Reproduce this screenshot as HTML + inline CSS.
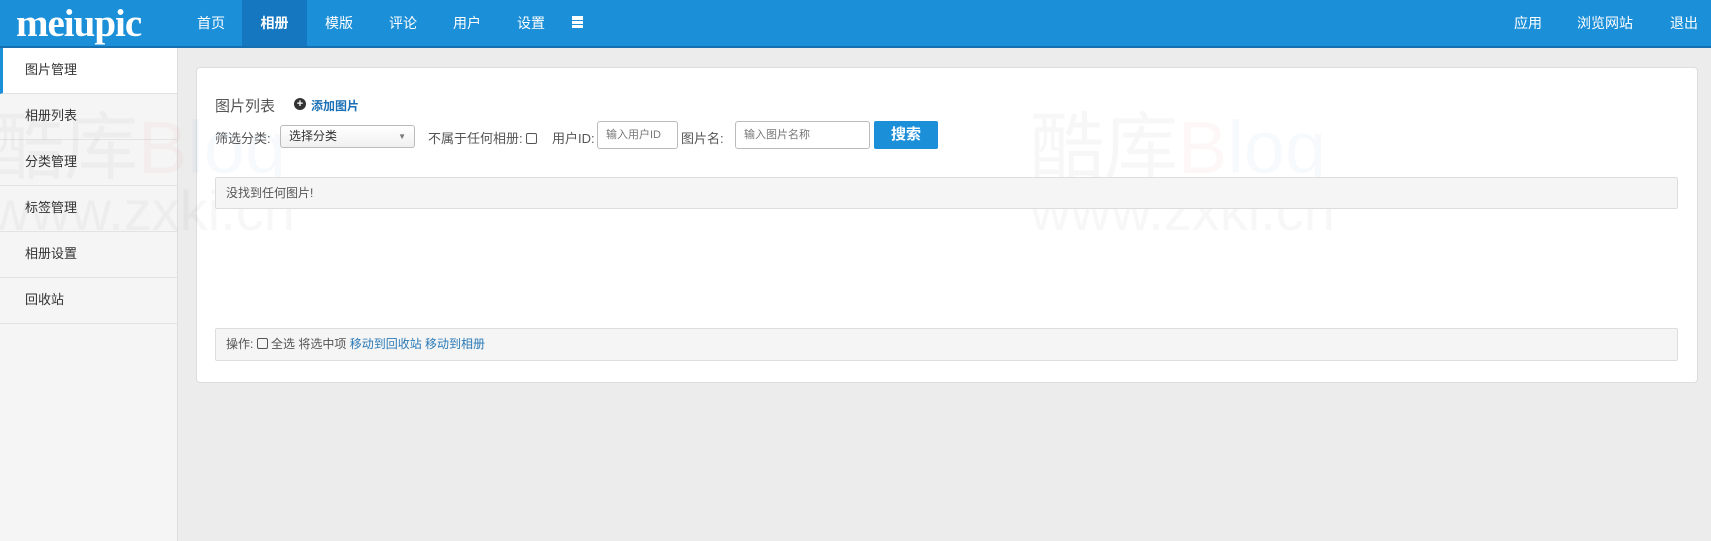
<!DOCTYPE html>
<html><head><meta charset="utf-8"><style>
*{margin:0;padding:0;box-sizing:border-box}
body{width:1711px;height:541px;overflow:hidden;background:#ececec;font-family:"Liberation Sans","Noto Sans CJK SC",sans-serif;font-size:13px;color:#555;position:relative}
.hd{position:absolute;left:0;top:0;width:1711px;height:48px;background:#1b8fd8;border-bottom:2px solid #1670b0}
.logo{position:absolute;left:16px;top:1px;color:#fff;font-family:"Liberation Serif",serif;font-size:39px;font-weight:bold;letter-spacing:-1px}
.nav{position:absolute;top:0;height:46px;line-height:46px;color:#fff;font-size:14px;text-align:center}
.act{background:#1577bf;font-weight:bold}
.sb{position:absolute;left:0;top:48px;width:178px;height:493px;background:#f5f5f5;border-right:1px solid #ddd}
.sb div{height:46px;line-height:44px;padding-left:25px;border-bottom:1px solid #e3e3e3;font-size:13px;color:#333}
.sb .on{background:#fff;border-left:3px solid #1b8fd8;padding-left:22px}
.pn{position:absolute;left:196px;top:67px;width:1502px;height:316px;background:#fff;border:1px solid #ddd;border-radius:4px}
.a{position:absolute;white-space:nowrap}
.inp{position:absolute;border:1px solid #bbb;border-radius:3px;background:#fff;font-size:11px;color:#777;padding-left:8px;line-height:26px}
.box{position:absolute;background:#f5f5f5;border:1px solid #ddd;border-radius:2px;font-size:12px;padding-left:10px}
.cb{display:inline-block;width:11px;height:11px;border:1px solid #555;border-radius:2px;vertical-align:-1px}
.wm{position:absolute;font-size:74px;color:rgba(0,0,0,0.03);white-space:nowrap}
</style></head><body>
<div class="hd">
<div class="logo">meiupic</div>
<div class="nav" style="left:190px;width:42px">首页</div>
<div class="nav act" style="left:242px;width:65px">相册</div>
<div class="nav" style="left:318px;width:42px">模版</div>
<div class="nav" style="left:382px;width:42px">评论</div>
<div class="nav" style="left:446px;width:42px">用户</div>
<div class="nav" style="left:510px;width:42px">设置</div>
<div style="position:absolute;left:572px;top:16px;width:11px;height:12px;background:#fff;border-top:0"></div>
<div style="position:absolute;left:572px;top:20px;width:11px;height:1px;background:#1b8fd8"></div>
<div style="position:absolute;left:572px;top:24px;width:11px;height:1px;background:#1b8fd8"></div>
<div class="nav" style="left:1507px;width:42px">应用</div>
<div class="nav" style="left:1572px;width:66px">浏览网站</div>
<div class="nav" style="left:1663px;width:42px">退出</div>
</div>
<div class="sb">
<div class="on">图片管理</div><div>相册列表</div><div>分类管理</div><div>标签管理</div><div>相册设置</div><div>回收站</div>
</div>
<div class="pn"></div>
<div class="wm" style="left:1030px;top:88px">酷库<span style="color:rgba(220,60,60,0.04)">B</span><span style="color:rgba(30,120,200,0.035)">log</span></div>
<div class="wm" style="left:1030px;top:178px;font-size:56px">www.zxki.cn</div>
<div class="wm" style="left:-10px;top:88px">酷库<span style="color:rgba(220,60,60,0.04)">B</span><span style="color:rgba(30,120,200,0.035)">log</span></div>
<div class="wm" style="left:-10px;top:178px;font-size:56px">www.zxki.cn</div>
<div class="a" style="left:215px;top:95px;font-size:15px;color:#555">图片列表</div>
<div class="a" style="left:294px;top:98px;width:12px;height:12px;border-radius:50%;background:#333;color:#fff;font-size:11px;line-height:12px;text-align:center;font-weight:bold">+</div>
<div class="a" style="left:311px;top:97px;color:#1a6fb5;font-size:12px;font-weight:bold">添加图片</div>
<div class="a" style="left:215px;top:128px">筛选分类:</div>
<div class="inp" style="left:280px;top:125px;width:135px;height:23px;line-height:21px;font-size:12px;color:#333;background:linear-gradient(#fff,#f0f0f0)">选择分类<span style="position:absolute;right:8px;font-size:8px;color:#777">▼</span></div>
<div class="a" style="left:428px;top:128px">不属于任何相册: <span class="cb"></span></div>
<div class="a" style="left:552px;top:128px">用户ID:</div>
<div class="inp" style="left:597px;top:121px;width:81px;height:28px">输入用户ID</div>
<div class="a" style="left:681px;top:128px">图片名:</div>
<div class="inp" style="left:735px;top:121px;width:135px;height:28px">输入图片名称</div>
<div class="a" style="left:874px;top:121px;width:64px;height:28px;background:#1b8fd8;border-radius:2px;color:#fff;font-weight:bold;font-size:15px;line-height:28px;text-align:center">搜索</div>
<div class="box" style="left:215px;top:177px;width:1463px;height:32px;line-height:30px">没找到任何图片!</div>
<div class="box" style="left:215px;top:328px;width:1463px;height:33px;line-height:31px">操作: <span class="cb"></span> 全选 将选中项 <span style="color:#2a7ab8">移动到回收站</span> <span style="color:#2a7ab8">移动到相册</span></div>
</body></html>
